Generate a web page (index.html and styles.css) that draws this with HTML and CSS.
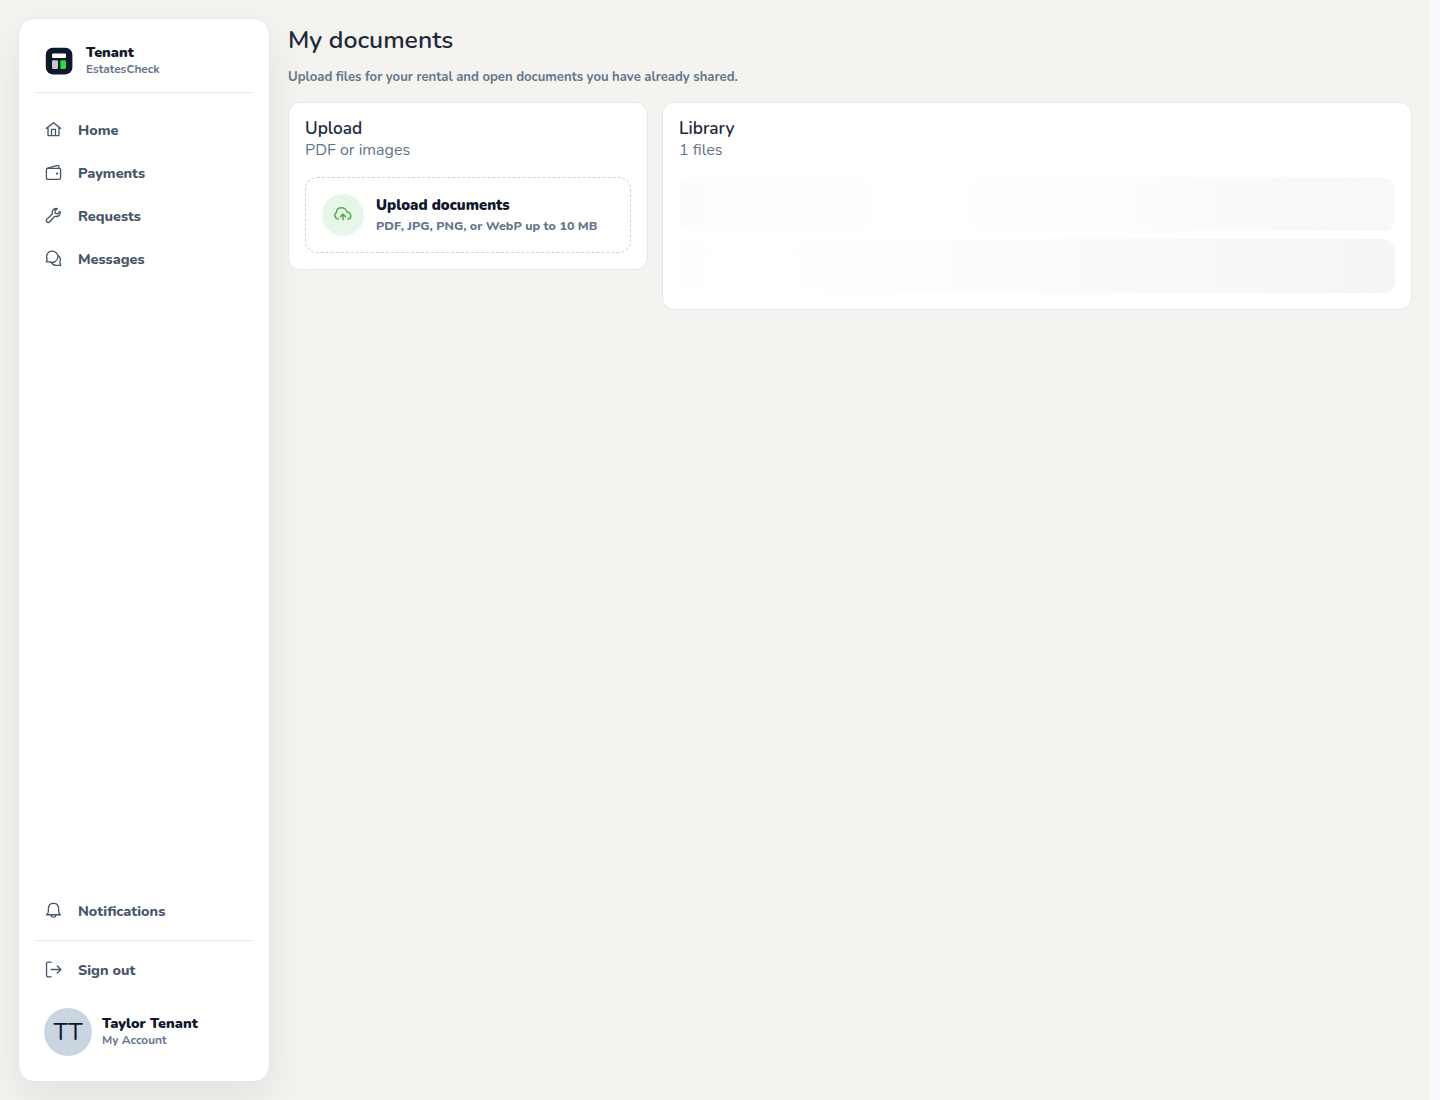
FILE: index.html
```html
<!DOCTYPE html>
<html lang="en">
<head>
<meta charset="utf-8">
<title>My documents</title>
<link rel="stylesheet" href="styles.css">
</head>
<body>
<div class="app">
  <aside class="sidebar">
    <div class="brand">
      <svg class="logo" viewBox="0 0 28 28"><rect x=".8" y=".8" width="26.600" height="26.600" rx="7" fill="#0f172a"/><rect x="7" y="6.500" width="14" height="4.400" rx="1" fill="#fff"/><rect x="7" y="13.300" width="6" height="8.700" rx="1.200" fill="#c5c8cf"/><rect x="15.300" y="13.300" width="5.700" height="8.700" rx="1.200" fill="#22dd44"/></svg>
      <div class="stack"><strong class="name">Tenant</strong><span class="small">EstatesCheck</span></div>
    </div>
    <nav class="nav">
      <a class="item"><svg class="icon" viewBox="0 0 18 18"><path d="M1.500 7.800 9 1.900l7.500 5.900M3.200 6.800v8.700h11.600V6.800M6.900 15.300V8.900h4.200v6.400"/></svg><span class="label">Home</span></a>
      <a class="item"><svg class="icon" viewBox="0 0 18 18"><rect x="1.500" y="4.600" width="15" height="11.700" rx="1.400"/><path d="M2 4.700 13.300 1.500q1.300-.3 1.300 1v2"/><circle class="dot" cx="12.800" cy="10.200" r="1.100"/></svg><span class="label">Payments</span></a>
      <a class="item"><svg class="icon" viewBox="0 0 18 18"><path d="M15.900 4.700c.9 3-1.600 5.900-4.700 5.300-.8-.1-1.300.1-1.700.6l-4.400 5a2.100 2.100 0 0 1-3-3l5-4.400c.5-.4.700-1 .6-1.700-.5-3.100 2.300-5.500 5.300-4.700l-2.500 2.500.3 2.500 2.500.4z"/></svg><span class="label">Requests</span></a>
      <a class="item"><svg class="icon" viewBox="0 0 18 18"><path d="M2.300 9.800a6 6 0 1 1 2.900 2.800H1.500zM13.600 5.600a5.600 5.600 0 0 1 2.100 6.900l.9 3.800h-4.800a5.700 5.700 0 0 1-5-3.200"/></svg><span class="label">Messages</span></a>
    </nav>
    <div class="bottom">
      <a class="item"><svg class="icon" viewBox="0 0 18 18"><path d="M1.600 13.500c1.400-.9 2-2.100 2-4.100V6.800c0-3.400 2.100-5.300 5.400-5.300s5.400 1.900 5.400 5.300v2.600c0 2 .6 3.200 2 4.100zM6.300 13.800c.3 3 5.100 3 5.400 0"/></svg><span class="label">Notifications</span></a>
      <div class="rule"></div>
      <a class="item"><svg class="icon" viewBox="0 0 18 18"><path d="M6.500 1.200H3.600Q1.600 1.200 1.600 3.200v11.600q0 2 2 2h2.900M6.500 9h10.400M13 5.200 16.900 9 13 12.800"/></svg><span class="label">Sign out</span></a>
      <div class="account"><div class="avatar">TT</div><div class="stack"><strong class="name">Taylor Tenant</strong><span class="small">My Account</span></div></div>
    </div>
  </aside>
  <main class="main">
    <h1 class="title">My documents</h1>
    <p class="lead">Upload files for your rental and open documents you have already shared.</p>
    <div class="grid">
      <section class="card">
        <h2 class="heading">Upload</h2>
        <p class="sub">PDF or images</p>
        <div class="drop">
          <div class="bubble"><svg class="cloud" viewBox="0 0 18 18"><path d="M4.200 13C-.1 12.200.2 7.500 2.400 6.500 2.500.6 11.200.1 12.900 6c5 .3 4.800 6.600 1.100 7M9 13.800V8.500M6.500 10.600 9 8.100l2.500 2.500"/></svg></div>
          <div class="stack"><strong class="drop-title">Upload documents</strong><span class="hint">PDF, JPG, PNG, or WebP up to 10 MB</span></div>
        </div>
      </section>
      <section class="card">
        <h2 class="heading">Library</h2>
        <p class="sub">1 files</p>
        <div class="skeletons"><div class="skeleton first"></div><div class="skeleton second"></div></div>
      </section>
    </div>
  </main>
</div>
</body>
</html>
```
FILE: styles.css
```css
* { box-sizing: border-box; }
html { background: #f8fafc; }
body { margin: 0; font-family: Nunito, "Noto Sans", sans-serif; color: #0f172a; }
h1, h2, p { margin: 0; }
.app { height: 1100px; margin-right: 10px; padding: 18px; display: flex; gap: 18px; background: #f4f3ef; overflow: hidden; }
.sidebar { width: 252px; height: 1064px; flex: none; display: flex; flex-direction: column; padding: 16px; background: #fff; border: 1px solid #e2e8f0; border-radius: 16px; box-shadow: 0 18px 45px rgba(15, 23, 42, .08); }
.brand { height: 58px; padding: 0 10px 6px; display: flex; align-items: center; gap: 13px; border-bottom: 1px solid #e2e8f0; }
.brand .logo { width: 28px; height: 28px; }
.stack { display: flex; flex-direction: column; align-items: flex-start; white-space: nowrap; }
.name { margin: -1px 0 1px; font-size: 14.4px; line-height: 18px; font-weight: 900; }
.small { margin: -1px 0 1px; font-size: 11.84px; line-height: 16px; font-weight: 700; color: #64748b; }
.nav { padding-top: 16px; display: flex; flex-direction: column; }
.item { height: 43px; padding: 0 10px; display: flex; align-items: center; gap: 15px; font-size: 14.4px; font-weight: 800; color: #475569; white-space: nowrap; }
.label { margin-bottom: 2px; line-height: 20px; }
.icon, .cloud { width: 18px; height: 18px; fill: none; stroke: currentColor; stroke-width: 1.4; stroke-linejoin: round; stroke-linecap: round; }
.icon { width: 17px; height: 17px; margin: 0 1px 2px 0; }
.icon .dot { fill: currentColor; stroke: none; }
.bottom { margin-top: auto; }
.rule { height: 1px; margin: 7px 0 8px; background: #e2e8f0; }
.account { height: 48px; margin: 16px 9px 9px; display: flex; align-items: center; gap: 10px; }
.avatar { width: 48px; height: 48px; display: flex; align-items: center; justify-content: center; border-radius: 50%; background: #cbd5e1; font-size: 24px; }
.main { flex: 1; min-width: 0; }
.title { height: 44px; font-size: 24.8px; line-height: 44px; font-weight: 600; color: #1e293b; }
.lead { margin-top: 5px; font-size: 13.12px; line-height: 20px; font-weight: 700; color: #64748b; }
.grid { margin-top: 15px; display: grid; grid-template-columns: 360px 750px; gap: 14px; align-items: start; }
.card { padding: 15px 16px 16px; background: #fff; border: 1px solid #e2e8f0; border-radius: 12px; }
.heading { font-size: 17.28px; line-height: 22px; font-weight: 600; color: #1e293b; }
.sub { font-size: 16px; line-height: 21px; color: #64748b; }
.drop { height: 76px; margin-top: 16px; padding: 0 16px; display: flex; align-items: center; gap: 12px; border: 1px dashed #cbd5e1; border-radius: 12px; }
.bubble { width: 42px; height: 42px; display: grid; place-items: center; border-radius: 50%; background: #e8f5e9; color: #4caf50; }
.cloud { stroke-width: 1.5; }
.drop-title { font-size: 14.72px; line-height: 22px; font-weight: 900; }
.hint { font-size: 12.48px; line-height: 20px; font-weight: 800; color: #64748b; }
.skeletons { margin-top: 16px; display: grid; gap: 8px; }
.skeleton { height: 54px; border-radius: 12px; }
.first { background: linear-gradient(90deg, #fbfcfc, #fff 33%, #fdfdfd 58%, #fbfcfc 66%, #f9fafc 76%, #f7f8fa); }
.second { background: linear-gradient(90deg, #fefefe, #fff 10%, #fcfdfd 32%, #fafbfc 48%, #f7f8fa 75%, #f4f5f7); }
```
